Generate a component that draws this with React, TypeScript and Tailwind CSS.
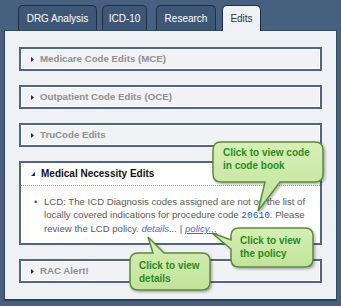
import React from "react";

const Tri = () => (
  <svg width="5" height="7" viewBox="0 0 5 7" className="shrink-0">
    <path d="M1 1 L4 3.5 L1 6 Z" fill="#23235c" />
  </svg>
);

const TriDown = () => (
  <svg width="6" height="6" viewBox="0 0 6 6" className="shrink-0">
    <path d="M5 1 L5 5 L1 5 Z" fill="#23235c" />
  </svg>
);

function Section({ title }: { title: string }) {
  return (
    <div className="h-[24px] border-2 border-[#4f6688] bg-[#f0f2f6] flex items-center pl-[9px] gap-[5px] shadow-[inset_0_0_0_1px_#ffffff]">
      <Tri />
      <span className="text-[9.7px] font-bold text-[#8f8f8f] leading-none">{title}</span>
    </div>
  );
}

export default function App() {
  return (
    <div className="relative w-[341px] h-[306px] bg-[#47607f] overflow-hidden font-['Liberation_Sans',Arial,sans-serif]">
      <div className="flex h-[30px] pt-[5px] pl-[18px] items-stretch relative z-10">
        <div className="w-[79px] rounded-t-[5px] border border-b-0 border-[#1f2e44] bg-[#3e5777] text-white text-[10px] flex items-center justify-center">
          DRG Analysis
        </div>
        <div className="ml-[5px] w-[45px] rounded-t-[5px] border border-b-0 border-[#1f2e44] bg-[#3e5777] text-white text-[10px] flex items-center justify-center">
          ICD-10
        </div>
        <div className="ml-[9px] w-[60px] rounded-t-[5px] border border-b-0 border-[#1f2e44] bg-[#3e5777] text-white text-[10px] flex items-center justify-center">
          Research
        </div>
        <div className="ml-[6px] w-[39px] h-[26px] rounded-t-[5px] border border-b-0 border-[#1f2e44] bg-[#eff1f5] text-[#333] text-[10px] flex items-center justify-center">
          Edits
        </div>
      </div>
      <div className="mx-[4px] h-[271px] bg-[#eff1f5] border border-[#34485f] border-b-2 border-b-[#2c3f58] pt-[16px] px-[14px] flex flex-col gap-[14px]">
        <Section title="Medicare Code Edits (MCE)" />
        <Section title="Outpatient Code Edits (OCE)" />
        <Section title="TruCode Edits" />
        <div className="h-[84px] border-2 border-[#4f6688] bg-white flex flex-col">
          <div className="h-[23px] flex items-center pl-[9px] gap-[5px] border-b border-dotted border-[#9a9a9a] shrink-0">
            <TriDown />
            <span className="text-[10px] font-bold text-[#111] leading-none">Medical Necessity Edits</span>
          </div>
          <div className="flex pl-[13px] pr-[4px] pt-[9px] text-[9.6px] leading-[13px] text-[#5a5a5a] whitespace-nowrap">
            <span className="w-[10px] shrink-0">•</span>
            <span>
              LCD: The ICD Diagnosis codes assigned are not on the list of
              <br />
              locally covered indications for procedure code{" "}
              <span className="font-['Liberation_Mono',monospace] text-[9.5px] text-[#2c55b8]">20610</span>. Please
              <br />
              review the LCD policy. <span className="italic text-[#3e6acb]">details...</span> |{" "}
              <span className="italic text-[#3e6acb] underline">policy...</span>
            </span>
          </div>
        </div>
        <Section title="RAC Alert!" />
      </div>

      <svg className="absolute left-0 top-0 pointer-events-none" width="341" height="306" viewBox="0 0 341 306">
        <defs>
          <linearGradient id="g" x1="0" y1="0" x2="0" y2="1">
            <stop offset="0" stopColor="#d6efb6" />
            <stop offset="1" stopColor="#c2e39b" />
          </linearGradient>
          <filter id="s" x="-10%" y="-10%" width="130%" height="140%">
            <feDropShadow dx="1.5" dy="1.5" stdDeviation="1" floodColor="#000" floodOpacity="0.3" />
          </filter>
        </defs>
        <path
          d="M221,142 H315 Q323,142 323,150 V174 Q323,182 315,182 H280 L258,211 L265,182 H221 Q213,182 213,174 V150 Q213,142 221,142 Z"
          fill="url(#g)"
          stroke="#5b8b3a"
          strokeWidth="1.5"
          filter="url(#s)"
        />
        <path
          d="M239,228 H305 Q313,228 313,236 V259 Q313,267 305,267 H239 Q231,267 231,259 V249 L212,233 L231,240 V236 Q231,228 239,228 Z"
          fill="url(#g)"
          stroke="#5b8b3a"
          strokeWidth="1.5"
          filter="url(#s)"
        />
        <path
          d="M138,253 H153 L148,237 L164,253 H202 Q210,253 210,261 V282 Q210,290 202,290 H138 Q130,290 130,282 V261 Q130,253 138,253 Z"
          fill="url(#g)"
          stroke="#5b8b3a"
          strokeWidth="1.5"
          filter="url(#s)"
        />
      </svg>
      <div className="absolute left-[223px] top-[146px] text-[10px] font-bold leading-[13px] text-[#2b8a1d]">
        Click to view code
        <br />
        in code book
      </div>
      <div className="absolute left-[240px] top-[234px] text-[10px] font-bold leading-[13px] text-[#2b8a1d]">
        Click to view
        <br />
        the policy
      </div>
      <div className="absolute left-[139px] top-[259px] text-[10px] font-bold leading-[13px] text-[#2b8a1d]">
        Click to view
        <br />
        details
      </div>
    </div>
  );
}
